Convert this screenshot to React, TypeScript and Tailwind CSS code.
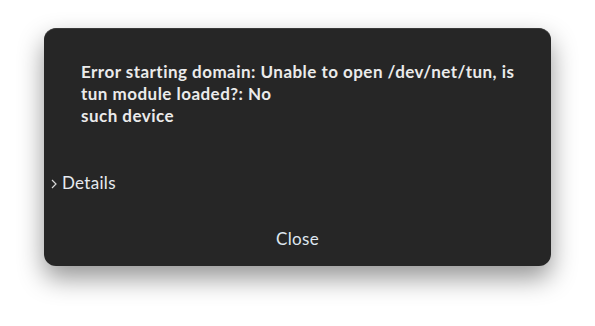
import React from "react";

export default function App() {
  return (
    <div className="w-[595px] h-[326px] bg-white pt-[28px] pl-[44px]" style={{ fontFamily: "Lato, 'Noto Sans', sans-serif" }}>
      <div className="w-[507px] h-[238px] rounded-[12px] bg-[#262626] border-t border-[#3a3a3a] shadow-[0_12px_26px_rgba(0,0,0,0.42)] flex flex-col">
        <div className="pt-[32px] pl-[37px] pr-[20px] text-[17px] tracking-[0.47px] leading-[22px] font-bold text-[#ebebeb]">
          Error starting domain: Unable to open /dev/net/tun, is
          <br />
          tun module loaded?: No
          <br />
          such device
        </div>
        <div className="mt-[44px] pl-[5px] flex items-center gap-[3px] text-[17px] tracking-[0.3px] text-[#e6eaf0] h-[24px]">
          <svg width="10" height="12" viewBox="0 0 10 12" className="mt-[1px]">
            <path d="M3 2 L7 6 L3 10" fill="none" stroke="#d8d8d8" strokeWidth="1.2" />
          </svg>
          <span>Details</span>
        </div>
        <div className="mt-[32px] h-[24px] flex items-center justify-center">
          <button className="text-[17px] tracking-[0.3px] text-[#dfe7f0] bg-transparent">Close</button>
        </div>
      </div>
    </div>
  );
}
